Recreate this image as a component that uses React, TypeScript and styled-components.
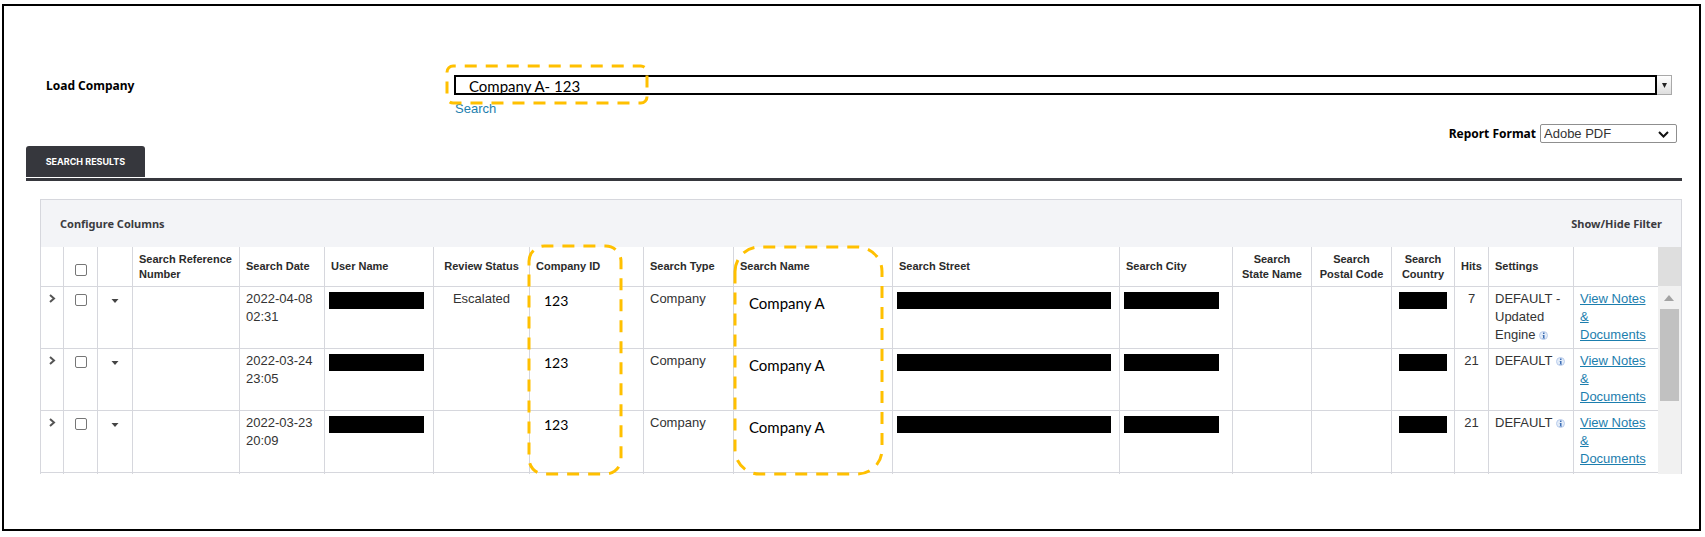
import React from "react";
import styled, { createGlobalStyle } from "styled-components";

const sans = `"Liberation Sans", Arial, sans-serif`;
const heading = `"Noto Sans", "Open Sans", sans-serif`;
const overlay = `Lato, Calibri, sans-serif`;
const line = "#d6d7dd";

const GlobalStyle = createGlobalStyle`
  *, *::before, *::after { box-sizing: border-box; }
  body { margin: 0; background: #fff; font: 13px/18px ${sans}; color: #333; }
`;

const Frame = styled.main`
  margin: 4px 4px 7px 2px;
  border: 2px solid #000;
  padding: 69px 17px 55px 22px;
`;

const LoadRow = styled.div`
  display: grid;
  grid-template-columns: 408px 1fr;
  align-items: start;
  padding: 0 10px 0 20px;
`;

const FieldLabel = styled.label`
  font: 700 12px/22px ${heading};
  color: #000;
`;

const Combo = styled.div`
  position: relative;
  display: flex;
  height: 20px;
`;

const ComboInput = styled.input`
  flex: 1;
  min-width: 0;
  border: 2px solid #000;
  padding: 2px 13px 0;
  background: #fff;
  color: #000;
  font: 15px/14px ${overlay};
`;

const ComboButton = styled.button`
  width: 15px;
  padding: 0;
  border: 1px solid #a9a9a9;
  border-left: 0;
  background: linear-gradient(#fff, #dedede);
  display: grid;
  place-items: center;
`;

const Link = styled.a`
  color: #1c7eae;
`;

const SearchLink = styled(Link)`
  display: inline-block;
  margin-top: 5px;
  padding-left: 1px;
  text-decoration: none;
`;

const FormatRow = styled.div`
  display: flex;
  justify-content: flex-end;
  align-items: center;
  gap: 4px;
  margin-top: 6px;
  padding-right: 5px;
  height: 19px;
`;

const SelectWrap = styled.div`
  position: relative;
  display: flex;
  svg { position: absolute; right: 8px; top: 7px; pointer-events: none; }
`;

const FormatSelect = styled.select`
  appearance: none;
  width: 137px;
  height: 19px;
  padding: 0 3px;
  border: 1px solid #8f8f8f;
  border-radius: 2px;
  background: #fff;
  color: #333;
  font: 13px/16px ${sans};
`;

const TabBar = styled.nav`
  margin-top: 3px;
  padding-bottom: 1px;
  border-bottom: 3px solid #36373d;
  display: flex;
`;

const Tab = styled.button`
  height: 31px;
  width: 119px;
  padding: 0;
  border: 0;
  border-radius: 3px 3px 0 0;
  background: #36373d;
  color: #fff;
  font: 700 9px/14px Inter, ${heading};
`;

const Panel = styled.section`
  margin: 18px 0 0 14px;
  border: 1px solid ${line};
  border-bottom: 0;
`;

const PanelHeader = styled.header`
  display: flex;
  justify-content: space-between;
  align-items: center;
  height: 47px;
  padding: 0 19px;
  background: #f3f4f7;
`;

const HeaderAction = styled.button`
  border: 0;
  padding: 0;
  background: none;
  color: #3b3b3f;
  font: 700 11px/18px ${heading};
`;

const PanelBody = styled.div`
  display: flex;
`;

const Table = styled.table`
  flex: 1;
  width: 100%;
  table-layout: fixed;
  border-collapse: separate;
  border-spacing: 0;
`;

const Th = styled.th<{ $center?: boolean }>`
  position: relative;
  height: 40px;
  padding: 0 6px;
  border-bottom: 1px solid ${line};
  text-align: ${(p) => (p.$center ? "center" : "left")};
  vertical-align: middle;
  font: 700 11px/15px ${sans};
  color: #2b2b2b;
  & + & { border-left: 1px solid ${line}; }
`;

const Td = styled.td<{ $center?: boolean; $redacted?: boolean }>`
  height: 62px;
  padding: ${(p) => (p.$redacted ? "5px 4px" : "3px 6px 4px")};
  border-bottom: 1px solid ${line};
  text-align: ${(p) => (p.$center ? "center" : "left")};
  vertical-align: top;
  & + & { border-left: 1px solid ${line}; }
`;

const EdgeTd = styled.td`
  height: 1px;
  padding: 0;
  & + & { border-left: 1px solid ${line}; }
`;

const Redaction = styled.div<{ $width: number }>`
  display: inline-block;
  vertical-align: top;
  width: ${(p) => p.$width}px;
  height: 17px;
  background: #000;
`;

const Entry = styled.div<{ $name?: boolean }>`
  padding: ${(p) => (p.$name ? "4px 9px 0" : "2px 8px 0")};
  color: #000;
  font: ${(p) => (p.$name ? 15 : 14)}px/18px ${overlay};
  white-space: nowrap;
`;

const IconButton = styled.button<{ $tall?: boolean }>`
  display: block;
  width: 100%;
  height: ${(p) => (p.$tall ? 18 : 12)}px;
  padding: 0;
  border: 0;
  background: none;
  svg { display: block; margin: 0 auto; }
`;

const Check = styled.input<{ $head?: boolean }>`
  appearance: none;
  display: block;
  width: 12px;
  height: 12px;
  margin: ${(p) => (p.$head ? "6px auto 0" : "4px auto 0")};
  border: 1px solid #767676;
  border-radius: 2px;
  background: #fff;
`;

const InfoIcon = styled.svg`
  vertical-align: -1px;
`;

const Scrollbar = styled.div`
  width: 23px;
  display: flex;
  flex-direction: column;
`;

const Corner = styled.div`
  height: 39px;
  background: #dedede;
`;

const Track = styled.div`
  flex: 1;
  padding-right: 2px;
  background: #f1f1f1;
`;

const ScrollUp = styled.button`
  display: grid;
  place-items: center;
  width: 100%;
  height: 23px;
  padding: 0;
  border: 0;
  background: none;
`;

const Thumb = styled.div`
  height: 92px;
  margin-left: 2px;
  background: #c1c1c1;
`;

const Marker = styled.svg<{ $left: number; $top: number }>`
  position: absolute;
  z-index: 1;
  left: ${(p) => p.$left}px;
  top: ${(p) => p.$top}px;
  overflow: visible;
  pointer-events: none;
`;

type HighlightProps = { width: number; height: number; left: number; top: number };

/* Dashed rounded outline; the dashes run clockwise from the upper left corner. */
function Highlight({ width: w, height: h, left, top }: HighlightProps) {
  const r = Math.min(w, h) / 6;
  const d = `M0 ${r}A${r} ${r} 0 0 1 ${r} 0H${w - r}A${r} ${r} 0 0 1 ${w} ${r}V${h - r}A${r} ${r} 0 0 1 ${w - r} ${h}H${r}A${r} ${r} 0 0 1 0 ${h - r}Z`;
  return (
    <Marker $left={left} $top={top} width={w} height={h} aria-hidden="true">
      <path d={d} fill="none" stroke="#ffc000" strokeWidth="3" strokeDasharray="12 9" />
    </Marker>
  );
}

const columnWidths = [22, 34, 35, 107, 85, 109, 96, 114, 90, 159, 227, 113, 79, 80, 63, 34, 85, 85];

const rows = [
  { date: "2022-04-08 02:31", status: "Escalated", hits: 7, settings: "DEFAULT - Updated Engine" },
  { date: "2022-03-24 23:05", status: "", hits: 21, settings: "DEFAULT" },
  { date: "2022-03-23 20:09", status: "", hits: 21, settings: "DEFAULT" },
];

export default function App() {
  return (
    <>
      <GlobalStyle />
      <Frame>
        <LoadRow>
          <FieldLabel htmlFor="company">Load Company</FieldLabel>
          <div>
            <Combo>
              <ComboInput id="company" type="text" defaultValue="Company A- 123" />
              <ComboButton type="button" aria-label="Show companies">
                <svg width="5" height="5" viewBox="0 0 5 5"><path d="M0 0H5L2.5 5Z" fill="#222" /></svg>
              </ComboButton>
              <Highlight left={-7} top={-9} width={200} height={37} />
            </Combo>
            <SearchLink href="#search">Search</SearchLink>
          </div>
        </LoadRow>
        <FormatRow>
          <FieldLabel htmlFor="format">Report Format</FieldLabel>
          <SelectWrap>
            <FormatSelect id="format" defaultValue="pdf">
              <option value="pdf">Adobe PDF</option>
            </FormatSelect>
            <svg width="11" height="7" viewBox="0 0 11 7"><path d="M1 1L5.5 5.5L10 1" fill="none" stroke="#111" strokeWidth="2" /></svg>
          </SelectWrap>
        </FormatRow>
        <TabBar>
          <Tab type="button">SEARCH RESULTS</Tab>
        </TabBar>
        <Panel>
          <PanelHeader>
            <HeaderAction type="button">Configure Columns</HeaderAction>
            <HeaderAction type="button">Show/Hide Filter</HeaderAction>
          </PanelHeader>
          <PanelBody>
            <Table>
              <colgroup>
                {columnWidths.map((w, i) => <col key={i} width={w} />)}
              </colgroup>
              <thead>
                <tr>
                  <Th />
                  <Th><Check $head type="checkbox" aria-label="Select all rows" /></Th>
                  <Th />
                  <Th>Search Reference Number</Th>
                  <Th>Search Date</Th>
                  <Th>User Name</Th>
                  <Th $center>Review Status</Th>
                  <Th>
                    Company ID
                    <Highlight left={-1} top={-1} width={92} height={228} />
                  </Th>
                  <Th>Search Type</Th>
                  <Th>
                    Search Name
                    <Highlight left={1} top={0} width={147} height={227} />
                  </Th>
                  <Th>Search Street</Th>
                  <Th>Search City</Th>
                  <Th $center>Search<br />State Name</Th>
                  <Th $center>Search<br />Postal Code</Th>
                  <Th $center>Search<br />Country</Th>
                  <Th $center>Hits</Th>
                  <Th>Settings</Th>
                  <Th />
                </tr>
              </thead>
              <tbody>
                {rows.map((row) => (
                  <tr key={row.date}>
                    <Td $redacted>
                      <IconButton type="button" aria-label="Expand row">
                        <svg width="7" height="9" viewBox="0 0 7 9"><path d="M1 1L5 4.500L1 8" fill="none" stroke="#555" strokeWidth="2" /></svg>
                      </IconButton>
                    </Td>
                    <Td><Check type="checkbox" aria-label={`Select ${row.date}`} /></Td>
                    <Td $redacted>
                      <IconButton $tall type="button" aria-label="Row actions">
                        <svg width="8" height="4" viewBox="0 0 8 4"><path d="M0.500 0H7.500L4 4Z" fill="#444" /></svg>
                      </IconButton>
                    </Td>
                    <Td />
                    <Td>{row.date}</Td>
                    <Td $redacted><Redaction $width={95} /></Td>
                    <Td $center>{row.status}</Td>
                    <Td><Entry>123</Entry></Td>
                    <Td>Company</Td>
                    <Td><Entry $name>Company A</Entry></Td>
                    <Td $redacted><Redaction $width={214} /></Td>
                    <Td $redacted><Redaction $width={95} /></Td>
                    <Td />
                    <Td />
                    <Td $redacted $center><Redaction $width={48} /></Td>
                    <Td $center>{row.hits}</Td>
                    <Td>
                      {row.settings}{" "}
                      <InfoIcon width="9" height="9" viewBox="0 0 9 9" aria-hidden="true">
                        <circle cx="4.500" cy="4.500" r="4" fill="#e3ecf8" stroke="#b9cdec" />
                        <path d="M4 1.500H5.500V3H4ZM3.500 4H5.500V7H6V7.500H3.500V7H4V4.500H3.500Z" fill="#3f6fb5" />
                      </InfoIcon>
                    </Td>
                    <Td><Link href="#notes">View Notes &amp; Documents</Link></Td>
                  </tr>
                ))}
                <tr aria-hidden="true">
                  {columnWidths.map((_, i) => <EdgeTd key={i} />)}
                </tr>
              </tbody>
            </Table>
            <Scrollbar>
              <Corner />
              <Track>
                <ScrollUp type="button" aria-label="Scroll up">
                  <svg width="10" height="6" viewBox="0 0 10 6"><path d="M0 6L5 0L10 6Z" fill="#a3a3a3" /></svg>
                </ScrollUp>
                <Thumb />
              </Track>
            </Scrollbar>
          </PanelBody>
        </Panel>
      </Frame>
    </>
  );
}
